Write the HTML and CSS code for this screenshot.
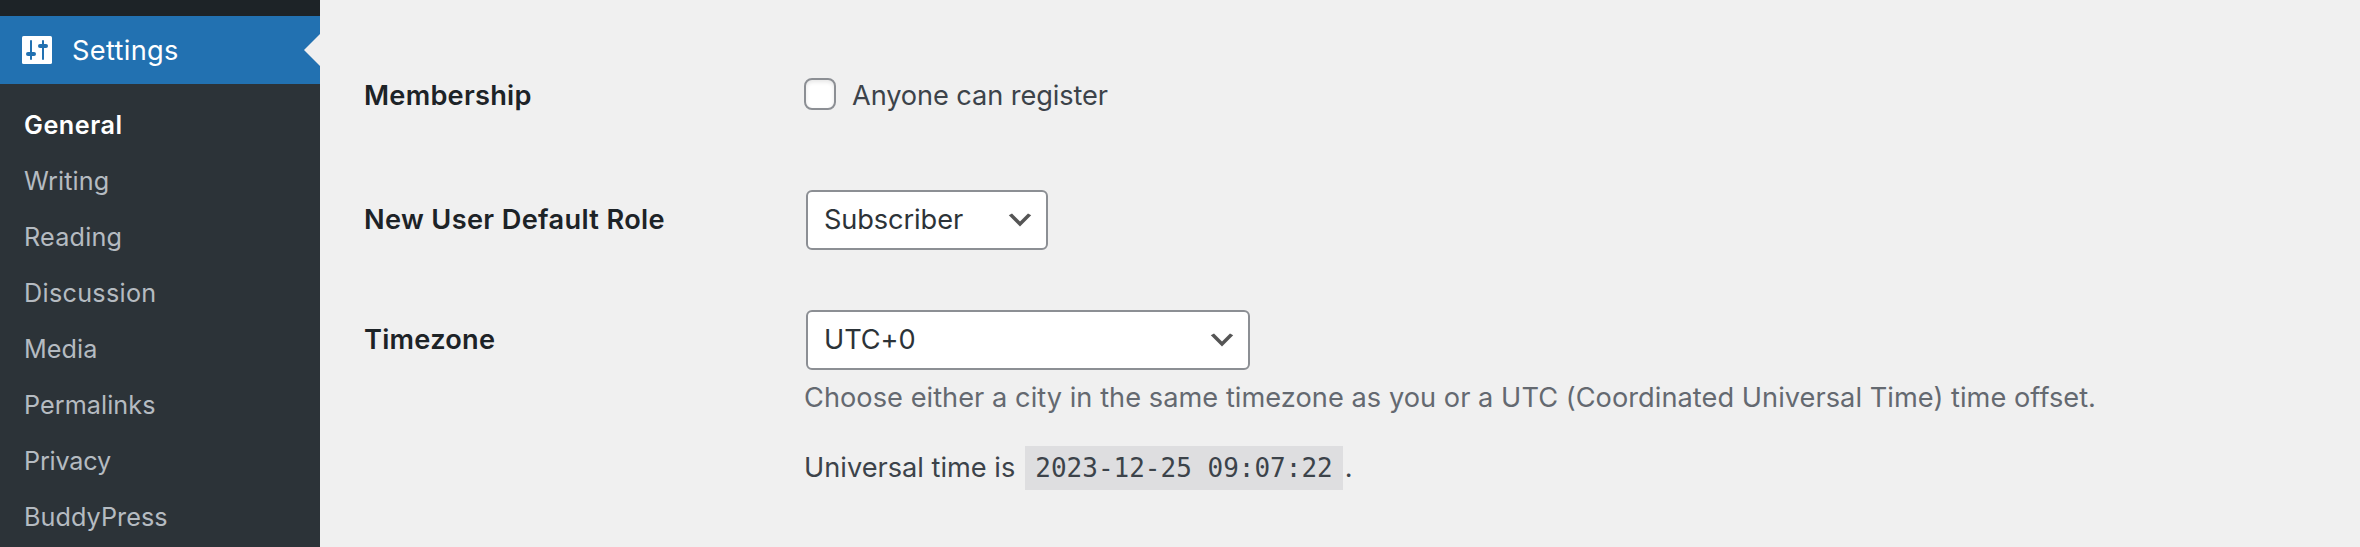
FILE: index.html
```html
<!DOCTYPE html>
<html lang="en">
<head>
<meta charset="utf-8">
<title>General Settings</title>
<link rel="stylesheet" href="styles.css">
</head>
<body>
<nav class="menu">
  <a class="menu-top">
    <svg class="menu-icon" width="30" height="28" viewBox="0 0 30 28">
      <rect width="30" height="28" rx="1.6" fill="#fff"/>
      <g fill="#2271b1">
        <rect x="8" y="4" width="2" height="20" rx="1"/>
        <rect x="4" y="16" width="10" height="4" rx="2"/>
        <rect x="20" y="4" width="2" height="20" rx="1"/>
        <rect x="16" y="8" width="10" height="4" rx="2"/>
      </g>
    </svg>
    <span class="menu-name">Settings</span>
    <span class="menu-arrow"></span>
  </a>
  <ul class="submenu">
    <li class="item current">General</li>
    <li class="item writing">Writing</li>
    <li class="item reading">Reading</li>
    <li class="item discussion">Discussion</li>
    <li class="item">Media</li>
    <li class="item">Permalinks</li>
    <li class="item privacy">Privacy</li>
    <li class="item">BuddyPress</li>
  </ul>
</nav>
<main class="content">
  <div class="row membership">
    <div class="label short">Membership</div>
    <label class="check"><input type="checkbox" class="box"><span>Anyone can register</span></label>
  </div>
  <div class="row role">
    <div class="label">New User Default Role</div>
    <div class="select role-select">
      <span>Subscriber</span>
      <svg width="32" height="32" viewBox="0 0 20 20"><path d="M5 6l5 5 5-5 2 1-7 7-7-7 2-1z" fill="#555"/></svg>
    </div>
  </div>
  <div class="row timezone">
    <div class="label short">Timezone</div>
    <div class="field">
      <div class="select zone-select">
        <span>UTC+0</span>
        <svg width="32" height="32" viewBox="0 0 20 20"><path d="M5 6l5 5 5-5 2 1-7 7-7-7 2-1z" fill="#555"/></svg>
      </div>
      <p class="description">Choose either a city in the same timezone as you or a UTC (Coordinated Universal Time) time offset.</p>
      <p class="utc"><span>Universal time is</span><code class="time">2023-12-25 09:07:22</code><span>.</span></p>
    </div>
  </div>
</main>
</body>
</html>
```
FILE: styles.css
```css
* { box-sizing: border-box; }
body {
  margin: 0;
  height: 547px;
  overflow: hidden;
  display: flex;
  background: #f0f0f0;
  color: #3c434a;
  font: 27.2px/42px Inter, "Liberation Sans", sans-serif;
}
.menu {
  flex: none;
  width: 320px;
  padding-top: 16px;
  background: #1d2327;
  display: flex;
  flex-direction: column;
}
.menu-top {
  flex: none;
  height: 68px;
  padding-left: 22px;
  display: flex;
  align-items: center;
  background: #2271b1;
  color: #fff;
}
.menu-name { margin-left: 20px; padding-top: 1px; letter-spacing: .33px; }
.menu-arrow {
  margin-left: auto;
  border: 16px solid transparent;
  border-left-width: 0;
  border-right-color: #f0f0f0;
}
.submenu {
  flex: 1;
  margin: 0;
  padding: 13px 24px 0;
  list-style: none;
  background: #2c3338;
  color: #b5bbc1;
  font-size: 25.2px;
  line-height: 56px;
  letter-spacing: .06px;
}
.item { height: 56px; white-space: nowrap; }
.current { color: #fff; font-weight: 600; letter-spacing: .55px; }
.writing { letter-spacing: .1px; }
.reading { letter-spacing: .2px; }
.discussion { letter-spacing: .3px; }
.privacy { letter-spacing: -.2px; }
.content { flex: 1; padding: 66px 0 0 44px; }
.row { display: flex; align-items: flex-start; }
.membership { margin-bottom: 64px; }
.role { margin-bottom: 60px; }
.label {
  flex: none;
  width: 440px;
  line-height: 60px;
  color: #1d2327;
  font-weight: 600;
  letter-spacing: .34px;
}
.short { letter-spacing: .25px; }
.check {
  height: 60px;
  display: flex;
  align-items: center;
  gap: 16px;
  letter-spacing: -.1px;
}
.box {
  appearance: none;
  width: 32px;
  height: 32px;
  margin: 0 0 4px;
  border: 2px solid #8c8f94;
  border-radius: 8px;
  background: #fff;
  box-shadow: inset 0 2px 4px rgba(0, 0, 0, .1);
}
.select {
  height: 60px;
  margin-left: 2px;
  padding: 0 10px 0 16px;
  display: flex;
  align-items: center;
  justify-content: space-between;
  border: 2px solid #8c8f94;
  border-radius: 6px;
  background: #fff;
  color: #2c3338;
  letter-spacing: -.1px;
}
.role-select { width: 242px; }
.zone-select { width: 444px; }
.description {
  margin: 7px 0 27px;
  color: #646970;
  letter-spacing: .04px;
  white-space: nowrap;
}
.utc { margin: 0; display: flex; align-items: center; }
.time {
  height: 44px;
  margin: 0 2px 0 10px;
  padding: 0 10px;
  background: #dedee0;
  font: 26px/44px "DejaVu Sans Mono", monospace;
}
```
